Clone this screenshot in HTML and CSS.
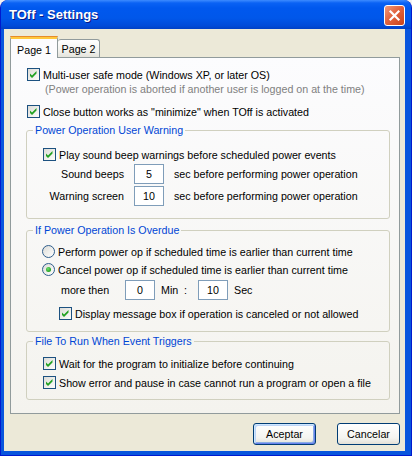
FILE: index.html
```html
<!DOCTYPE html>
<html lang="en">
<head>
<meta charset="UTF-8" />
<title>TOff - Settings</title>
<link rel="stylesheet" href="styles.css">
</head>
<body>

<div class="window">
  <div class="titlebar">
    <span class="title">TOff - Settings</span>
    <button class="close" title="Close">
      <svg width="19" height="19" viewBox="0 0 19 19"><path d="M5.5 5.5 L13.5 13.5 M13.5 5.5 L5.5 13.5" stroke="#fff" stroke-width="2.2" stroke-linecap="square"/></svg>
    </button>
  </div>

  <div class="client">
    <div class="tabs">
      <div class="tab active">Page 1</div>
      <div class="tab">Page 2</div>
    </div>

    <div class="panel">
      <label class="check">
        <span class="box"><svg viewBox="0 0 11 11"><polygon points="2,4.5 4,6.5 8.5,2 8.5,4.5 4,9 2,7"/></svg></span>
        Multi-user safe mode (Windows XP, or later OS)
      </label>
      <div class="note">(Power operation is aborted if another user is logged on at the time)</div>
      <label class="check spaced">
        <span class="box"><svg viewBox="0 0 11 11"><polygon points="2,4.5 4,6.5 8.5,2 8.5,4.5 4,9 2,7"/></svg></span>
        Close button works as "minimize" when TOff is activated
      </label>

      <fieldset class="group warn">
        <legend>Power Operation User Warning</legend>
        <div class="group-body">
          <label class="check">
            <span class="box"><svg viewBox="0 0 11 11"><polygon points="2,4.5 4,6.5 8.5,2 8.5,4.5 4,9 2,7"/></svg></span>
            Play sound beep warnings before scheduled power events
          </label>
          <div class="delays">
            <span class="lbl">Sound beeps</span>
            <span class="field">5</span>
            <span>sec before performing power operation</span>
            <span class="lbl">Warning screen</span>
            <span class="field">10</span>
            <span>sec before performing power operation</span>
          </div>
        </div>
      </fieldset>

      <fieldset class="group overdue">
        <legend>If Power Operation Is Overdue</legend>
        <div class="group-body">
          <label class="radio">
            <span class="dot"></span>
            Perform power op if scheduled time is earlier than current time
          </label>
          <label class="radio second">
            <span class="dot on"></span>
            Cancel power op if scheduled time is earlier than current time
          </label>
          <div class="more">
            <span class="more-lbl">more then</span>
            <span class="field">0</span>
            <span class="unit min">Min</span>
            <span class="colon">:</span>
            <span class="field">10</span>
            <span class="unit">Sec</span>
          </div>
          <label class="check indent">
            <span class="box"><svg viewBox="0 0 11 11"><polygon points="2,4.5 4,6.5 8.5,2 8.5,4.5 4,9 2,7"/></svg></span>
            Display message box if operation is canceled or not allowed
          </label>
        </div>
      </fieldset>

      <fieldset class="group runfile">
        <legend>File To Run When Event Triggers</legend>
        <div class="group-body">
          <label class="check">
            <span class="box"><svg viewBox="0 0 11 11"><polygon points="2,4.5 4,6.5 8.5,2 8.5,4.5 4,9 2,7"/></svg></span>
            Wait for the program to initialize before continuing
          </label>
          <label class="check next">
            <span class="box"><svg viewBox="0 0 11 11"><polygon points="2,4.5 4,6.5 8.5,2 8.5,4.5 4,9 2,7"/></svg></span>
            Show error and pause in case cannot run a program or open a file
          </label>
        </div>
      </fieldset>
    </div>

    <div class="buttons">
      <button class="btn default">Aceptar</button>
      <button class="btn">Cancelar</button>
    </div>
  </div>
</div>

</body>
</html>
```

FILE: styles.css
```css
html, body { margin: 0; padding: 0; background: #f2f2f2; }
body { font-family: "Liberation Sans", Arial, sans-serif; font-size: 10.7px; color: #000; }

.window {
  width: 412px; height: 456px; box-sizing: border-box;
  display: flex; flex-direction: column;
  background: #0855dd; border: 1px solid #0019cf; border-top: none;
  border-radius: 8px 8px 0 0; overflow: hidden;
}

/* title bar */
.titlebar {
  height: 29px; flex: none; display: flex; justify-content: space-between; align-items: flex-start;
  background: linear-gradient(#3d8bff 0, #0a62f4 3px, #0058ee 8px, #0057ea 18px, #004ad8 26px, #0040c4 29px);
}
.title {
  margin: 7px 0 0 8px; font-weight: bold; font-size: 13px; line-height: 16px; color: #fff;
  text-shadow: 1px 1px #0a1883;
}
.close {
  width: 21px; height: 21px; margin: 5px 6px 0 0; padding: 0; box-sizing: border-box;
  border: 1px solid #fff; border-radius: 3px; display: flex; align-items: center; justify-content: center;
  background: linear-gradient(135deg, #f09a7c 0%, #e2643f 45%, #c8421a 100%);
}
.close svg { display: block; }

/* client area */
.client {
  flex: 1; margin: 0 6px 4px 3px; background: #ece9d8;
  padding: 7px 5px 0 6px; display: flex; flex-direction: column;
}

.tabs { display: flex; align-items: flex-end; height: 22px; margin-bottom: -1px; position: relative; z-index: 1; }
.tab {
  box-sizing: border-box; border: 1px solid #919b9c; border-bottom: none; border-radius: 3px 3px 0 0;
  display: flex; align-items: center; justify-content: center;
}
.tab.active {
  width: 48px; height: 22px; background: #fcfcfe; padding-top: 2px;
  border-top: 3px solid #ffc83c; position: relative;
}
.tab.active::before {
  content: ""; position: absolute; left: -1px; right: -1px; top: -3px; height: 1px; background: #e68b2c;
  border-radius: 3px 3px 0 0;
}
.tab:not(.active) {
  width: 42px; height: 18px; margin-bottom: 1px; border-left: none;
  background: linear-gradient(#ffffff, #f3f3ef 60%, #e4e3dc);
}

.panel {
  height: 357px; box-sizing: border-box; border: 1px solid #919b9c;
  background: linear-gradient(#fcfcfe, #f4f3ee);
  padding: 10px 9px 0 15px;
}

/* check boxes and radios */
.check, .radio { display: flex; align-items: center; height: 13px; gap: 3px; white-space: nowrap; }
.box {
  width: 13px; height: 13px; box-sizing: border-box; flex: none;
  border: 1px solid #1c5180; background: linear-gradient(135deg, #dcdcd7, #fdfdfb);
}
.box svg { display: block; width: 11px; height: 11px; fill: #21a121; }
.panel > .check { padding-left: 1px; }
.note { margin: 1px 0 0 19px; height: 14px; line-height: 14px; color: #808080; white-space: nowrap; }
.check.spaced { margin-top: 9px; }

.dot {
  width: 13px; height: 13px; box-sizing: border-box; flex: none; border-radius: 50%;
  border: 1px solid #2f5e8c; background: linear-gradient(135deg, #dcdcd7, #ffffff);
  display: flex; align-items: center; justify-content: center;
}
.dot.on::after {
  content: ""; width: 5px; height: 5px; border-radius: 50%;
  background: radial-gradient(circle at 40% 35%, #6fe06f, #21a121 70%);
}

/* group boxes */
.group {
  margin: 0; padding: 0; min-inline-size: auto;
  border: 1px solid #d0d0bf; border-radius: 3px;
}
.group legend {
  margin-left: 6px; padding: 0 2px; line-height: 14px; color: #0046d5;
}
.group-body { padding-left: 16px; }
.warn { margin-top: 5px; padding-top: 11px; padding-bottom: 12px; }
.overdue { margin-top: 4px; padding-top: 8px; padding-bottom: 11px; }
.runfile { margin-top: 2px; padding-top: 9px; padding-bottom: 10px; }

.delays {
  display: grid; grid-template-columns: 81px 30px auto; column-gap: 10px; row-gap: 2px;
  align-items: center; margin-top: 3px;
}
.delays .lbl { text-align: right; }
.field {
  width: 30px; height: 20px; box-sizing: border-box; border: 1px solid #7f9db9; background: #fff;
  display: flex; align-items: center; justify-content: center;
}

.radio { margin-left: -1px; }
.radio.second { margin-top: 5px; }
.more { display: flex; align-items: center; height: 20px; margin: 4px 0 0 18px; }
.more-lbl { width: 64px; }
.unit { margin-left: 6px; }
.unit.min { width: 17px; }
.colon { width: 14px; margin-left: 6px; }
.check.indent { margin: 7px 0 0 16px; }
.check.next { margin-top: 6px; }

/* bottom buttons */
.buttons { display: flex; justify-content: flex-end; gap: 21px; margin-top: 9px; }
.btn {
  width: 63px; height: 22px; padding: 0; box-sizing: border-box;
  font-family: inherit; font-size: 10.7px; color: #000;
  border: 1px solid #003c74; border-radius: 3px;
  background: linear-gradient(#ffffff, #f4f4f0 70%, #e3e0d6);
}
.btn.default {
  box-shadow: inset 1px 1px #cee7ff, inset -1px -1px #6982ee, inset 2px 2px #bcd4f6, inset -2px -2px #89ade4;
}
```
